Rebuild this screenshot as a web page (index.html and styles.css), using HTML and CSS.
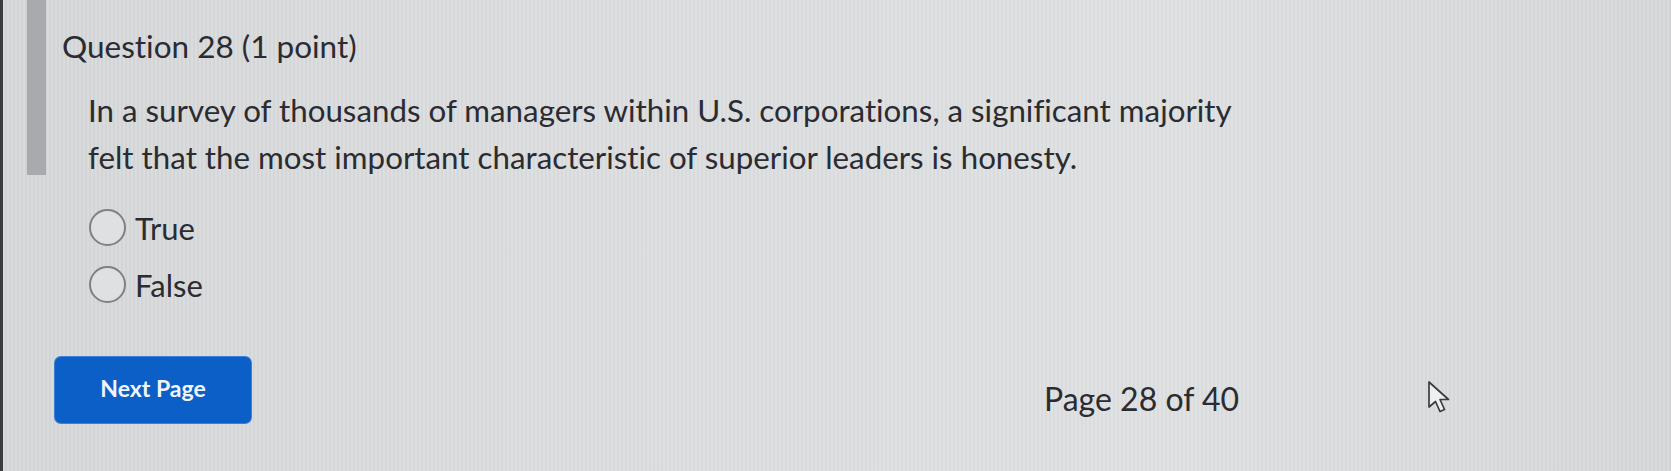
FILE: index.html
```html
<!DOCTYPE html>
<html>
<head>
<meta charset="utf-8">
<link rel="stylesheet" href="styles.css">
</head>
<body>
<div class="screen">
  <div class="question">
    <div class="bar"></div>
    <div class="qcontent">
      <h2 class="qtitle">Question 28 (1 point)</h2>
      <p class="qtext">In a survey of thousands of managers within U.S. corporations, a significant majority felt that the most important characteristic of superior leaders is honesty.</p>
    </div>
  </div>
  <div class="options">
    <label class="option"><span class="radio"></span><span class="otext">True</span></label>
    <label class="option"><span class="radio"></span><span class="otext">False</span></label>
  </div>
  <div class="footer">
    <button class="next">Next Page</button>
    <span class="pageinfo">Page 28 of 40</span>
  </div>
  <svg class="cursor" width="24" height="34" viewBox="0 0 24 34">
    <path d="M2 2 L2 27 L8.5 21.5 L13 31.5 L17.5 29.5 L13 19.5 L21.5 19.5 Z" fill="#eef0f0" stroke="#3a3c42" stroke-width="1.7" stroke-linejoin="round"/>
  </svg>
</div>
</body>
</html>
```
FILE: styles.css
```css
html, body {
  margin: 0;
  padding: 0;
}
body {
  width: 1671px;
  height: 471px;
  overflow: hidden;
  background: #d7d8da;
  font-family: Lato, "Open Sans", sans-serif;
  color: #2a2c32;
  font-variant-ligatures: none;
}
.screen {
  position: relative;
  width: 1671px;
  height: 471px;
  box-sizing: border-box;
  border-left: 3px solid #3b3c40;
  background:
    repeating-linear-gradient(90deg, rgba(255,255,255,0.10) 0 2px, rgba(0,0,0,0.015) 2px 4px),
    linear-gradient(90deg, #d4d6d8 0%, #dbdcde 35%, #dddfe0 70%, #d4d6d7 100%);
}
.question {
  display: flex;
  align-items: stretch;
}
.bar {
  width: 19px;
  margin-left: 24px;
  height: 175px;
  background: #a9aaae;
  flex: none;
}
.qcontent {
  padding-left: 16px;
  padding-top: 27px;
}
.qtitle {
  margin: 0;
  font-weight: 400;
  font-size: 31.5px;
  line-height: 38px;
}
.qtext {
  margin: 22px 0 0 26px;
  font-size: 31.3px;
  line-height: 47px;
  width: 1175px;
}
.options {
  display: flex;
  flex-direction: column;
  gap: 20px;
  padding-left: 86px;
  margin-top: 28px;
}
.option {
  display: flex;
  align-items: center;
  gap: 9px;
  height: 37px;
}
.radio {
  width: 37px;
  height: 37px;
  border: 2px solid #7f8186;
  border-radius: 50%;
  box-sizing: border-box;
  background: #dfe0e2;
}
.otext {
  font-size: 31px;
}
.footer {
  display: flex;
  align-items: center;
  margin-top: 54px;
  padding-left: 52px;
}
.next {
  width: 196px;
  height: 66px;
  border: none;
  border-radius: 6px;
  background: #0b5fc6;
  color: #f2f4f8;
  font-family: Lato, sans-serif;
  font-weight: 700;
  font-size: 23px;
  padding: 0 0 4px 0;
  box-shadow: 0 0 0 1px #3b7fd6;
}
.pageinfo {
  margin-left: 793px;
  margin-top: 16px;
  font-size: 32px;
}
.cursor {
  position: absolute;
  left: 1424px;
  top: 380px;
}
```
